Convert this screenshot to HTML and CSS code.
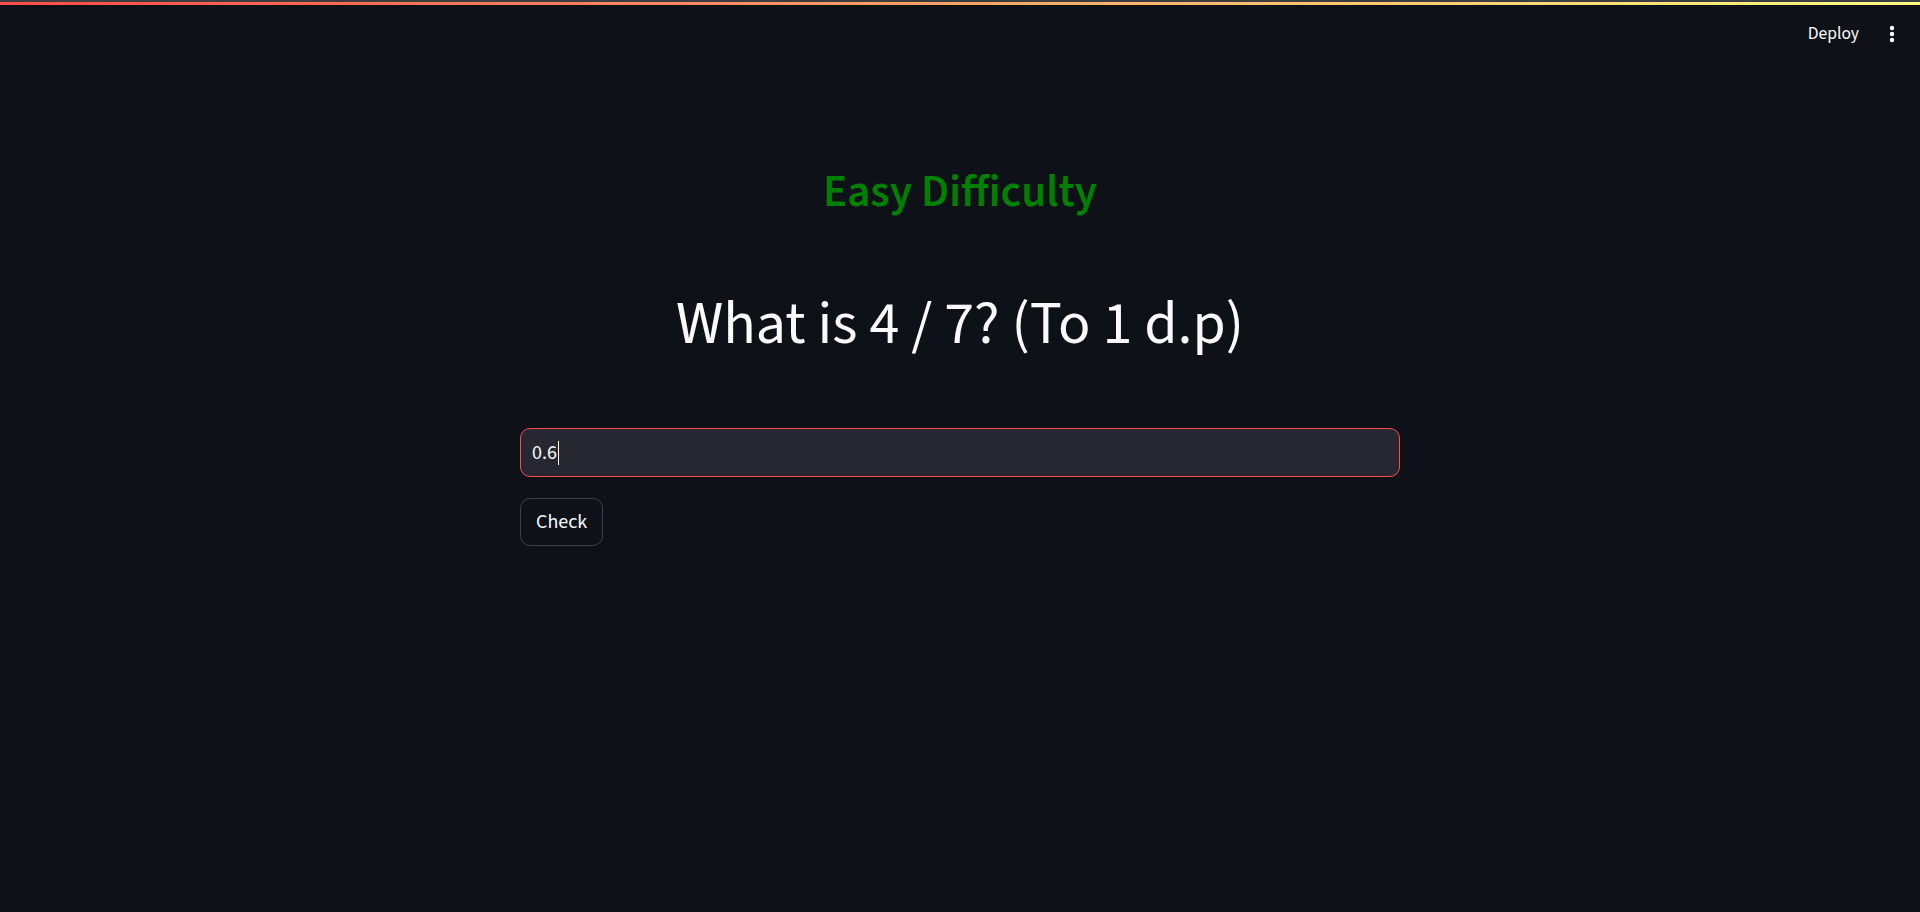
FILE: index.html
```html
<!DOCTYPE html>
<html lang="en">
<head>
<meta charset="utf-8">
<title>Quiz</title>
<link rel="stylesheet" href="styles.css">
</head>
<body>
<div class="app">
  <header class="topbar">
    <div class="decoration"></div>
    <div class="toolbar">
      <span class="deploy">Deploy</span>
      <span class="menu" aria-label="Main menu">
        <svg width="6" height="18" viewBox="0 0 6 18"><circle cx="3" cy="3" r="2.2" fill="#fafafa"/><circle cx="3" cy="9" r="2.2" fill="#fafafa"/><circle cx="3" cy="15" r="2.2" fill="#fafafa"/></svg>
      </span>
    </div>
  </header>
  <main class="main">
    <div class="block">
      <h2 class="difficulty">Easy Difficulty</h2>
      <h1 class="question">What is 4 / 7? (To 1 d.p)</h1>
      <div class="field" role="textbox"><span class="value">0.6</span><span class="caret"></span></div>
      <div class="actions"><button class="btn">Check</button></div>
    </div>
  </main>
</div>
</body>
</html>
```

FILE: styles.css
```css
html, body {
  margin: 0;
  padding: 0;
  background: #0e1117;
  color: #fafafa;
  font-family: "Source Sans Pro", "Source Sans 3", Lato, "Noto Sans", sans-serif;
}

.app {
  min-height: 912px;
  display: flex;
  flex-direction: column;
}

.topbar {
  height: 75px;
  display: flex;
  flex-direction: column;
}

.decoration {
  height: 5px;
  border-top: 2px solid #3c3d42;
  box-sizing: border-box;
  background: linear-gradient(90deg, #ff4b4b, #fffd80);
}

.toolbar {
  display: flex;
  justify-content: flex-end;
  align-items: center;
  gap: 30px;
  padding: 17px 25px 0 0;
}

.deploy {
  font-size: 17.5px;
  line-height: 24px;
  color: #fafafa;
}

.menu {
  display: flex;
  align-items: center;
  height: 24px;
}

.main {
  display: flex;
  justify-content: center;
}

.block {
  width: 880px;
  display: flex;
  flex-direction: column;
}

.difficulty {
  margin: 90px 0 0;
  font-size: 45px;
  line-height: 54px;
  font-weight: 600;
  text-align: center;
  color: #008000;
}

.question {
  margin: 70px 0 0;
  font-size: 60px;
  line-height: 72px;
  font-weight: 400;
  text-align: center;
  color: #fafafa;
}

.field {
  margin-top: 67px;
  height: 49px;
  box-sizing: border-box;
  border: 1px solid #ff4b4b;
  border-radius: 10px;
  background: #262730;
  display: flex;
  align-items: center;
  padding: 0 11px;
  font-size: 20px;
  color: #fafafa;
}

.caret {
  width: 1px;
  height: 24px;
  background: #fafafa;
  margin-left: 1px;
}

.actions {
  margin-top: 21px;
  display: flex;
}

.btn {
  height: 48px;
  padding: 0 15px;
  border: 1px solid #3d4047;
  border-radius: 10px;
  background: #0e1117;
  color: #fafafa;
  font-family: inherit;
  font-size: 20px;
}
```
